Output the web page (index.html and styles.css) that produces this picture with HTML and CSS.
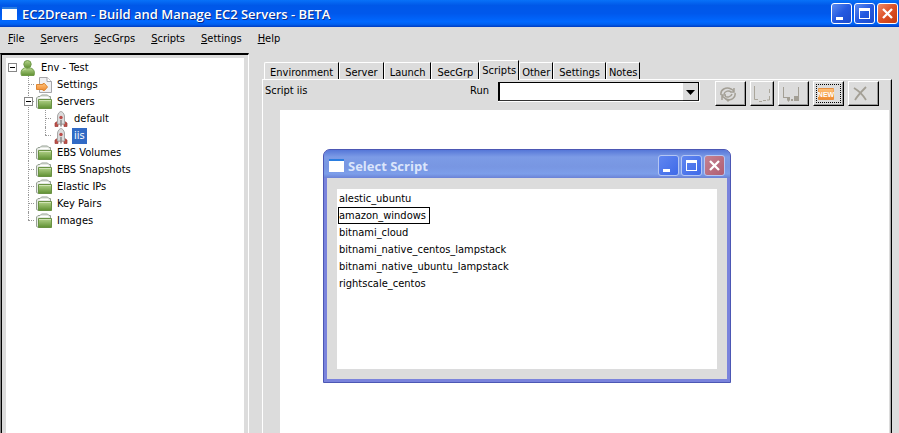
FILE: index.html
```html
<!DOCTYPE html>
<html lang="en">
<head>
<meta charset="utf-8">
<title>EC2Dream - Build and Manage EC2 Servers - BETA</title>
<link rel="stylesheet" href="styles.css">
</head>
<body>
<svg class="defs" aria-hidden="true">
  <defs>
    <linearGradient id="green" x1="0" y1="0" x2="0" y2="1"><stop offset="0" stop-color="#b5d48c"/><stop offset="1" stop-color="#5f9032"/></linearGradient>
    <linearGradient id="orange" x1="0" y1="0" x2="0" y2="1"><stop offset="0" stop-color="#ffc27a"/><stop offset="1" stop-color="#f08a30"/></linearGradient>
    <symbol id="folder" viewBox="0 0 16 16">
      <path d="M.5 13.500V4L2 2.500h2L5.500 1h6l1.500 1.500h1.500V7L2.500 14.500z" fill="#e4e8e2" stroke="#96a094"/>
      <path d="M3.500 3.500h9" stroke="#fff"/>
      <path d="M2.500 5.500h13v9h-13z" fill="url(#green)" stroke="#6a9243"/>
      <path d="M3 6.500h12" stroke="#cfe3b4"/>
    </symbol>
    <symbol id="person" viewBox="0 0 16 16">
      <path d="M1.500 15.500C.5 13 1 9 4.500 8h6c4 1 4.500 5 3.500 7.500z" fill="url(#green)" stroke="#6f9a48"/>
      <circle cx="7.500" cy="4.200" r="3.700" fill="url(#green)" stroke="#6f9a48"/>
      <path d="M3 10.500c1-1.500 2-1.500 3-1.500" stroke="#d3ecad" fill="none"/>
    </symbol>
    <symbol id="page" viewBox="0 0 16 16">
      <path d="M3.500.5H11l4.500 4v11h-12z" fill="#f0f0f2" stroke="#a5a5a8"/>
      <path d="M11 .5v4h4.500" fill="#fff" stroke="#a5a5a8"/>
      <path d="M.5 7.500h6.500V6.500h1.500l3 3.500-3 3.500H7v-1H.5z" fill="url(#orange)" stroke="#dc8633"/>
    </symbol>
    <symbol id="rocket" viewBox="0 0 16 16">
      <path d="M5 10l-3 2v3.500h3V13h6v2.500h3V12l-3-2z" fill="#bd5049" stroke="#9c3c38" stroke-width=".7"/>
      <path d="M4.500 13V5C5 2 7 .5 8 .5S11 2 11.500 5v8z" fill="#dcdcdc" stroke="#a8a8a8"/>
      <path d="M8 9v6.500" stroke="#8b8b8b" stroke-width="1.500"/>
      <circle cx="8" cy="6.500" r="1.700" fill="#ba4c4a"/>
    </symbol>
    <symbol id="min" viewBox="0 0 21 21"><path d="M5 14h7v3H5z" fill="#fff"/></symbol>
    <symbol id="max" viewBox="0 0 21 21"><path d="M5 5h11v11H5zM6 8v7h9V8z" fill="#fff" fill-rule="evenodd"/></symbol>
    <symbol id="close" viewBox="0 0 21 21"><path d="M6 6l9 9M15 6l-9 9" stroke="#fff" stroke-width="2.300"/></symbol>
  </defs>
</svg>

<div class="app">
  <header class="titlebar">
    <span class="app-icon"></span>
    <h1>EC2Dream - Build and Manage EC2 Servers - BETA</h1>
    <div class="window-buttons">
      <button class="win" aria-label="Minimize"><svg><use href="#min"/></svg></button>
      <button class="win" aria-label="Maximize"><svg><use href="#max"/></svg></button>
      <button class="win close" aria-label="Close"><svg><use href="#close"/></svg></button>
    </div>
  </header>
  <nav class="menubar">
    <button><u>F</u>ile</button>
    <button><u>S</u>ervers</button>
    <button><u>S</u>ecGrps</button>
    <button><u>S</u>cripts</button>
    <button><u>S</u>ettings</button>
    <button><u>H</u>elp</button>
  </nav>
  <div class="workspace">
    <aside class="sidebar">
      <div class="tree">
        <div class="row"><button class="toggle" aria-label="Collapse Env - Test"></button><svg class="icon"><use href="#person"/></svg><button class="label">Env - Test</button></div>
        <ul>
          <li><div class="row"><svg class="icon"><use href="#page"/></svg><button class="label">Settings</button></div></li>
          <li class="parent"><div class="row"><button class="toggle" aria-label="Collapse Servers"></button><svg class="icon"><use href="#folder"/></svg><button class="label">Servers</button></div>
            <ul>
              <li><div class="row"><svg class="icon"><use href="#rocket"/></svg><button class="label">default</button></div></li>
              <li><div class="row"><svg class="icon"><use href="#rocket"/></svg><button class="label selected">iis</button></div></li>
            </ul>
          </li>
          <li><div class="row"><svg class="icon"><use href="#folder"/></svg><button class="label">EBS Volumes</button></div></li>
          <li><div class="row"><svg class="icon"><use href="#folder"/></svg><button class="label">EBS Snapshots</button></div></li>
          <li><div class="row"><svg class="icon"><use href="#folder"/></svg><button class="label">Elastic IPs</button></div></li>
          <li><div class="row"><svg class="icon"><use href="#folder"/></svg><button class="label">Key Pairs</button></div></li>
          <li><div class="row"><svg class="icon"><use href="#folder"/></svg><button class="label">Images</button></div></li>
        </ul>
      </div>
    </aside>
    <main class="main">
      <div class="tabs" role="tablist">
        <button role="tab">Environment</button>
        <button role="tab">Server</button>
        <button role="tab">Launch</button>
        <button role="tab">SecGrp</button>
        <button role="tab" class="active" aria-selected="true">Scripts</button>
        <button role="tab" class="tight">Other</button>
        <button role="tab">Settings</button>
        <button role="tab" class="tight">Notes</button>
      </div>
      <section class="panel">
        <div class="toolbar">
          <span class="script-name">Script iis</span>
          <label for="run">Run</label>
          <div class="combo">
            <select id="run"><option></option></select>
            <svg viewBox="0 0 15 18"><path d="M0 0h15v18H0z" fill="#dcdcdc"/><path d="M0 17.500h15" stroke="#222"/><path d="M3 7h9l-4.500 5z" fill="#000"/></svg>
          </div>
          <div class="tools">
            <button aria-label="Refresh"><svg width="16" height="16" viewBox="0 0 16 16" fill="none" stroke="#a39f95" stroke-width="1.500"><path d="M1 9c-1-5 5-9 10-6l3 2M10 6h4V2M15 7c1 5-4 8-9 6l-4-3M6 9H2v5M4 8c1-3 5-4 7-2M12 8c-1 3-5 4-7 2"/><path d="M5 13h6l-3 3z" fill="#a39f95" stroke="none"/></svg></button>
            <button class="narrow" aria-label="Edit"><svg width="16" height="16" viewBox="0 0 16 16" fill="none" stroke="#aaa69b"><path d="M.5 0v13.500H4M5 15.500h3M9 14.500h3M15.500 3v4M15.500 10v4H13"/></svg></button>
            <button aria-label="Save"><svg width="16" height="16" viewBox="0 0 16 16" fill="#a39f95"><path d="M0 1h1v11H0zM1 11h3v1H1zM4 11h3v3L5.500 16 4 14zM8 13h2v2H8zM11 10h5v5h-5zM15 1h1v9h-1z"/></svg></button>
            <button class="focused" aria-label="New"><svg width="16" height="16" viewBox="0 0 16 16"><rect y="2.500" width="16" height="11" rx="1" fill="url(#orange)" stroke="#e8903f"/><text x="8" y="11">NEW</text></svg></button>
            <button aria-label="Delete"><svg width="16" height="16" viewBox="0 0 16 16" fill="none" stroke="#a39f95" stroke-width="1.800"><path d="M1 2c5 3 9 7 12 12M13 1C9 5 5 9 2 14"/></svg></button>
          </div>
        </div>
        <div class="editor"></div>
      </section>
    </main>
  </div>
</div>

<div class="dialog" role="dialog" aria-labelledby="dialog-title">
  <header class="dialog-title">
    <span class="app-icon"></span>
    <h2 id="dialog-title">Select Script</h2>
    <div class="window-buttons">
      <button class="win" aria-label="Minimize dialog"><svg><use href="#min"/></svg></button>
      <button class="win" aria-label="Maximize dialog"><svg><use href="#max"/></svg></button>
      <button class="win close" aria-label="Close dialog"><svg><use href="#close"/></svg></button>
    </div>
  </header>
  <div class="dialog-body">
    <ul class="scripts">
      <li><button>alestic_ubuntu</button></li>
      <li><button class="current">amazon_windows</button></li>
      <li><button>bitnami_cloud</button></li>
      <li><button>bitnami_native_centos_lampstack</button></li>
      <li><button>bitnami_native_ubuntu_lampstack</button></li>
      <li><button>rightscale_centos</button></li>
    </ul>
  </div>
</div>
</body>
</html>
```
FILE: styles.css
```css
* { box-sizing: border-box; }
body {
  margin: 0;
  background: #dcdcdc;
  color: #000;
  font: 11px/17px "DejaVu Sans Condensed", "DejaVu Sans", sans-serif;
  overflow: hidden;
}
button, select { font: inherit; color: inherit; border: 0; padding: 0; margin: 0; background: none; border-radius: 0; white-space: nowrap; }
ul { list-style: none; margin: 0; padding: 0; }
h1, h2 { margin: 0; flex: 1; color: #fff; font: 600 13px/20px "Open Sans", sans-serif; white-space: nowrap; }
.defs { position: absolute; width: 0; height: 0; }
.app { display: flex; flex-direction: column; height: 100vh; }

.titlebar {
  display: flex; align-items: center; gap: 5px; height: 27px; padding: 0 1px 0 2px;
  background: linear-gradient(#0872f8 0, #0058e8 20%, #0058ec 50%, #0068ff 80%, #0060f0 90%, #003cc0);
}
.titlebar h1 { text-shadow: 1px 1px #0a2a86; }
.app-icon { width: 15px; height: 13px; background: #fff; border-top: 2px solid #2a7de0; }
.window-buttons { display: flex; gap: 2px; }
.win { width: 21px; height: 21px; border: 1px solid #fff; border-radius: 3px; background: linear-gradient(135deg, #5c8cf0, #2459e0 50%, #1c4bcc); }
.win.close { background: linear-gradient(135deg, #ee8a68, #dd5025 50%, #c23a10); }
.win svg { display: block; width: 21px; height: 21px; margin: -1px; }

.menubar { display: flex; gap: 16px; height: 26px; padding: 3px 8px; }
.menubar button { height: 17px; }

.workspace { flex: 1; display: flex; min-height: 0; }
.sidebar { flex: 0 0 249px; padding: 3px 4px 0 3px; border-top: 2px solid #000; border-left: 1px solid #888; border-right: 1px solid #fff; box-shadow: inset 1px 0 #000; }
.tree { height: 100%; margin-left: 2px; padding: 1px 0 0 2px; background: #fff; }
.row { display: flex; align-items: center; height: 17px; }
.icon { flex: none; width: 16px; height: 16px; }
.label { height: 16px; margin-left: 3px; padding: 0 2px; line-height: 16px; }
.label.selected { background: #316ac5; color: #fff; }
.toggle {
  position: relative; z-index: 1; flex: none; width: 9px; height: 9px; margin-right: 3px; border: 1px solid #878787;
  background: linear-gradient(#000, #000) center / 5px 1px no-repeat #fff;
}
.tree > ul { padding-left: 20px; }
.tree li { position: relative; }
.tree li .row { padding-left: 8px; }
.tree li.parent > .row { padding-left: 0; margin-left: -4px; }
.tree li > ul { padding-left: 17px; }
.tree li::before { content: ""; position: absolute; left: 0; top: 0; height: 100%; border-left: 1px dotted #999; }
.tree li::after { content: ""; position: absolute; left: 0; top: 8px; width: 6px; border-top: 1px dotted #999; }
.tree li:last-child::before { height: 8px; }

.main { flex: 1; display: flex; flex-direction: column; min-width: 0; padding: 7px 7px 0 13px; }
.tabs { display: flex; align-items: flex-end; height: 19px; padding-left: 2px; }
.tabs button { height: 17px; padding: 0 5px; line-height: 19px; border-top: 1px solid #fff; border-left: 1px solid #fff; border-right: 1px solid #000; border-top-left-radius: 2px; }
.tabs button.tight { padding: 0 2px; }
.tabs .active { height: 20px; margin-bottom: -1px; padding: 0 2px; background: #dcdcdc; position: relative; }
.panel { flex: 1; display: flex; flex-direction: column; border-top: 1px solid #fff; border-left: 1px solid #fff; border-right: 1px solid #000; box-shadow: inset -1px 0 #aaa; }
.toolbar { display: flex; align-items: flex-start; height: 30px; padding: 1px 12px 0 2px; }
.toolbar label, .script-name { line-height: 19px; }
.script-name { flex: 1; }
.combo { position: relative; width: 202px; height: 20px; margin: 1px 15px 0 9px; border: 1px solid #fff; border-top: 0; border-left: 0; }
.combo select { appearance: none; display: block; width: 100%; height: 100%; background: #fff; border: 1px solid #000; border-left-width: 2px; border-bottom-color: #333; }
.combo svg { position: absolute; right: 1px; top: 1px; width: 15px; height: 18px; pointer-events: none; }
.tools { display: flex; gap: 4px; }
.tools button { display: flex; align-items: center; width: 31px; height: 25px; padding-left: 4px; border: 1px solid #fff; border-right-color: #000; border-bottom-color: #000; box-shadow: inset -1px -1px #999; }
.tools .narrow { width: 24px; padding-left: 3px; }
.tools .focused { outline: 1px dotted #000; outline-offset: -4px; }
.tools text { fill: #fff; font: bold 7px "Liberation Sans", sans-serif; text-anchor: middle; }
.editor { flex: 1; margin: 0 2px 0 17px; background: #fff; }

.dialog {
  position: absolute; left: 323px; top: 149px; width: 408px; height: 234px; display: flex; flex-direction: column;
  border: 1px solid #4c57b4; border-radius: 7px 7px 0 0; background: #7a83dc; padding: 0 3px 3px; overflow: hidden;
}
.dialog-title { display: flex; align-items: center; gap: 4px; height: 28px; margin: 0 -3px; padding: 3px 5px 0; background: linear-gradient(#5677d8, #7c9be6 25%, #7896e2 60%, #7c9eea 85%, #6b82d6); }
.dialog-title h2 { color: #dbe5fb; font-weight: 700; }
.dialog .win { border-color: #b4c6f4; background: linear-gradient(135deg, #6086f0, #3f6ae8); }
.dialog .win.close { background: linear-gradient(135deg, #c58291, #b05d72); }
.dialog-body { flex: 1; padding: 11px 10px 10px; background: #dcdcdc; }
.scripts { height: 100%; padding: 1px; background: #fff; }
.scripts li { height: 17px; }
.scripts button { display: block; height: 17px; padding: 0 1px; }
.scripts .current { height: 17px; padding: 0 3px 0 0; border: 1px solid #000; line-height: 15px; }
```
